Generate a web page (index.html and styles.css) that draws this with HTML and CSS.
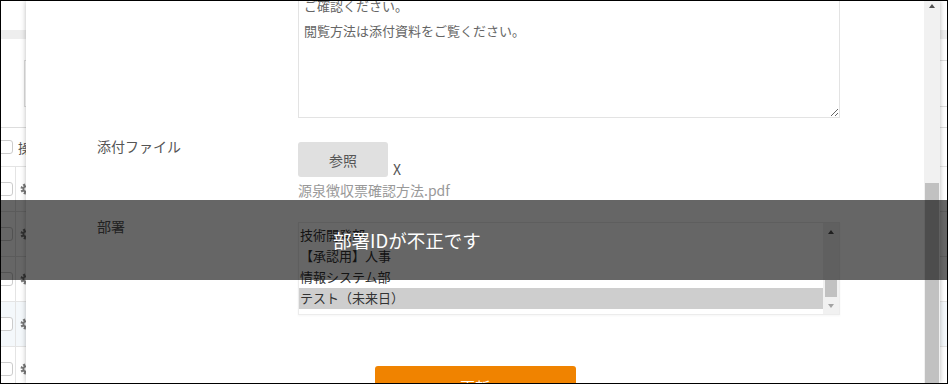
FILE: index.html
```html
<!DOCTYPE html>
<html lang="ja">
<head>
<meta charset="utf-8">
<title>お知らせ編集</title>
<link rel="stylesheet" href="styles.css">
</head>
<body>
<div class="frame">
  <div class="bg-page">
    <div class="bg-band"></div>
    <div class="bg-search"></div>
    <div class="bg-table">
      <div class="bg-row bg-head"><span class="cell1"><span class="cb"></span></span><span class="cell2 head-text">操作</span></div>
      <div class="bg-row"><span class="cell1"><span class="cb"></span></span><span class="cell2"><svg class="gear" viewBox="0 0 12 12"><circle cx="6" cy="6" r="4.2" fill="none" stroke="#777" stroke-width="2.6" stroke-dasharray="2 1.3"/><circle cx="6" cy="6" r="2.6" fill="none" stroke="#777" stroke-width="1.8"/></svg></span></div>
      <div class="bg-row"><span class="cell1"><span class="cb"></span></span><span class="cell2"><svg class="gear" viewBox="0 0 12 12"><circle cx="6" cy="6" r="4.2" fill="none" stroke="#777" stroke-width="2.6" stroke-dasharray="2 1.3"/><circle cx="6" cy="6" r="2.6" fill="none" stroke="#777" stroke-width="1.8"/></svg></span></div>
      <div class="bg-row"><span class="cell1"><span class="cb"></span></span><span class="cell2"><svg class="gear" viewBox="0 0 12 12"><circle cx="6" cy="6" r="4.2" fill="none" stroke="#777" stroke-width="2.6" stroke-dasharray="2 1.3"/><circle cx="6" cy="6" r="2.6" fill="none" stroke="#777" stroke-width="1.8"/></svg></span></div>
      <div class="bg-row bg-hl"><span class="cell1"><span class="cb"></span></span><span class="cell2"><svg class="gear" viewBox="0 0 12 12"><circle cx="6" cy="6" r="4.2" fill="none" stroke="#777" stroke-width="2.6" stroke-dasharray="2 1.3"/><circle cx="6" cy="6" r="2.6" fill="none" stroke="#777" stroke-width="1.8"/></svg></span></div>
      <div class="bg-row"><span class="cell1"><span class="cb"></span></span><span class="cell2"><svg class="gear" viewBox="0 0 12 12"><circle cx="6" cy="6" r="4.2" fill="none" stroke="#777" stroke-width="2.6" stroke-dasharray="2 1.3"/><circle cx="6" cy="6" r="2.6" fill="none" stroke="#777" stroke-width="1.8"/></svg></span></div>
    </div>
  </div>

  <div class="modal">
    <div class="modal-content">
      <div class="form">
        <div class="row row-text">
          <div class="label"></div>
          <div class="field">
            <textarea class="textarea">2020年分の源泉徴収票を配布しました。
ご確認ください。
閲覧方法は添付資料をご覧ください。</textarea>
          </div>
        </div>
        <div class="row row-file">
          <div class="label">添付ファイル</div>
          <div class="field">
            <div class="file-line">
              <button class="btn-browse" type="button">参照</button>
              <span class="remove">X</span>
            </div>
            <div class="filename">源泉徴収票確認方法.pdf</div>
          </div>
        </div>
        <div class="row row-dept">
          <div class="label">部署</div>
          <div class="field">
            <div class="listbox">
              <div class="options">
                <div class="option">技術開発部</div>
                <div class="option">【承認用】人事</div>
                <div class="option">情報システム部</div>
                <div class="option selected">テスト（未来日）</div>
              </div>
              <div class="lb-scroll">
                <div class="lb-btn"><span class="tri-up dark"></span></div>
                <div class="lb-track"><div class="lb-thumb"></div></div>
                <div class="lb-btn"><span class="tri-down"></span></div>
              </div>
            </div>
          </div>
        </div>
        <div class="actions">
          <button class="btn-submit" type="button">更新</button>
        </div>
      </div>
    </div>
    <div class="vscroll">
      <div class="vs-btn"><span class="tri-up dark"></span></div>
      <div class="vs-thumb"></div>
    </div>
  </div>

  <div class="toast">部署IDが不正です</div>
</div>
</body>
</html>
```
FILE: styles.css
```css
* { box-sizing: border-box; }
html, body { margin: 0; padding: 0; background: #fff; }
body { font-family: "Noto Sans CJK JP", "Noto Sans", sans-serif; }

.frame {
  position: relative;
  width: 948px;
  height: 384px;
  border: 1px solid #000;
  overflow: hidden;
  background: #fff;
}

/* background page */
.bg-page { padding-top: 29px; }
.bg-band { height: 9px; background: #eeeeee; }
.bg-search {
  margin: 21px 0 0 23px;
  width: 940px;
  height: 47px;
  border: 1px solid #dddddd;
  border-right: none;
}
.bg-table { margin-top: 20px; border-top: 1px solid #dddddd; }
.bg-row {
  display: flex;
  height: 45px;
  border-bottom: 1px solid #e4e4e4;
  align-items: center;
}
.bg-head { height: 39px; }
.bg-hl { background: #f4f8fb; }
.cell1 {
  width: 15px;
  height: 100%;
  border-right: 1px solid #e4e4e4;
  display: flex;
  align-items: center;
}
.bg-head .cell1 { border-right: none; }
.cb {
  display: block;
  width: 15px;
  height: 14px;
  margin-left: -3px;
  border: 1px solid #cccccc;
  border-radius: 3px;
  background: #fff;
}
.cell2 { padding-left: 4px; display: flex; align-items: center; }
.head-text { font-size: 13px; color: #555; padding-left: 2px; }
.gear { width: 12px; height: 12px; display: block; }

/* modal */
.modal {
  position: absolute;
  top: 0;
  bottom: 0;
  left: 25px;
  width: 914px;
  display: flex;
  background: #fff;
  box-shadow: 0 0 5px rgba(0, 0, 0, 0.28);
}
.modal-content { flex: 1; overflow: hidden; }
.form { margin-top: -40px; }
.row {
  display: grid;
  grid-template-columns: 201px 542px;
  padding-left: 71px;
  align-items: start;
}
.label {
  font-size: 14px;
  line-height: 9px;
  color: #555;
}
.textarea {
  display: block;
  width: 542px;
  height: 157px;
  margin: 0;
  padding: 6px 5px;
  border: 1px solid #e3e3e3;
  border-radius: 0;
  font-family: "Noto Sans CJK JP", "Noto Sans", sans-serif;
  font-size: 13px;
  line-height: 25px;
  color: #666;
  resize: both;
  outline: none;
  overflow: hidden;
}
.row-file { margin-top: 24px; }
.file-line { display: flex; align-items: flex-end; gap: 5px; }
.btn-browse {
  width: 90px;
  height: 35px;
  padding: 0;
  border: none;
  border-radius: 3px;
  background: #e0e0e0;
  color: #555;
  font-family: "Noto Sans CJK JP", "Noto Sans", sans-serif;
  font-size: 14px;
}
.remove { font-size: 14px; line-height: 16px; color: #555; }
.filename { margin-top: 3px; font-size: 14px; line-height: 20px; color: #999; }

.row-dept { margin-top: 22px; }
.listbox {
  display: flex;
  width: 542px;
  height: 93px;
  border: 1px solid #ececec;
  box-shadow: 0 1px 2px rgba(0, 0, 0, 0.04);
}
.options { flex: 1; padding-top: 2px; overflow: hidden; }
.option {
  height: 21px;
  line-height: 20px;
  font-size: 13px;
  color: #333;
  padding-left: 1px;
  white-space: nowrap;
}
.option.selected { background: #cecece; }
.lb-scroll {
  width: 16px;
  background: #f1f1f1;
  display: flex;
  flex-direction: column;
}
.lb-btn {
  height: 17px;
  display: flex;
  align-items: center;
  justify-content: center;
}
.lb-track { flex: 1; display: flex; flex-direction: column; justify-content: flex-end; }
.lb-thumb { height: 17px; margin: 0 2px; background: #c1c1c1; }

.tri-up {
  width: 0;
  height: 0;
  border-left: 3.5px solid transparent;
  border-right: 3.5px solid transparent;
  border-bottom: 4px solid #a3a3a3;
}
.tri-up.dark { border-bottom-color: #505050; }
.tri-down {
  width: 0;
  height: 0;
  border-left: 3.5px solid transparent;
  border-right: 3.5px solid transparent;
  border-top: 4px solid #a3a3a3;
}

.actions { margin-top: 51px; display: flex; justify-content: center; }
.btn-submit {
  width: 201px;
  height: 40px;
  border: none;
  border-radius: 3px;
  background: #f08300;
  color: #fff;
  font-family: "Noto Sans CJK JP", "Noto Sans", sans-serif;
  font-size: 15px;
}

/* modal scrollbar */
.vscroll {
  width: 16px;
  background: #f1f1f1;
  display: flex;
  flex-direction: column;
}
.vs-btn {
  height: 10px;
  display: flex;
  align-items: center;
  justify-content: center;
}
.vs-thumb {
  margin: auto 1px 0 1px;
  height: 200px;
  background: #c1c1c1;
}

/* toast */
.toast {
  position: absolute;
  left: 0;
  right: 0;
  top: 199px;
  height: 80px;
  padding-left: 332px;
  background: rgba(0, 0, 0, 0.6);
  color: #fff;
  font-size: 18.5px;
  line-height: 80px;
  white-space: nowrap;
}
```
